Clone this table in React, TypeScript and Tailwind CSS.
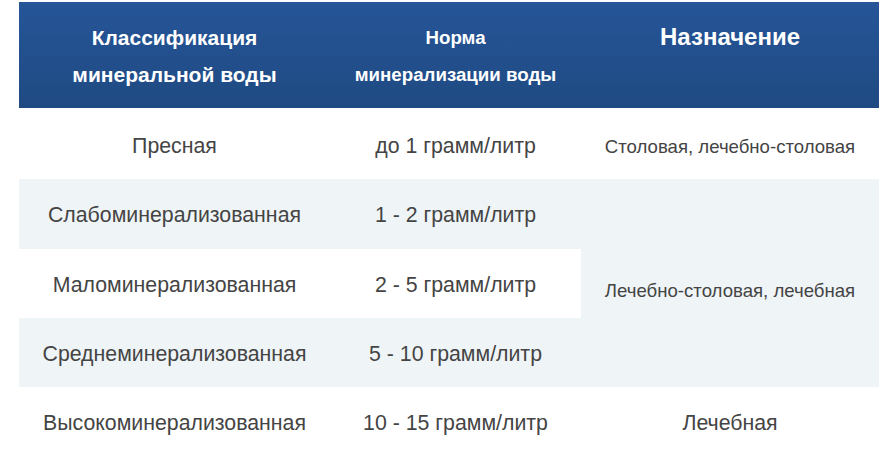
const rows = [
  { name: 'Пресная', norm: 'до 1 грамм/литр' },
  { name: 'Слабоминерализованная', norm: '1 - 2 грамм/литр' },
  { name: 'Маломинерализованная', norm: '2 - 5 грамм/литр' },
  { name: 'Среднеминерализованная', norm: '5 - 10 грамм/литр' },
  { name: 'Высокоминерализованная', norm: '10 - 15 грамм/литр' },
];

export default function App() {
  return (
    <div className="bg-white w-[880px] h-[468px] pt-[2px] pl-[19px] font-['Liberation_Sans',Arial,sans-serif]">
      <table className="border-collapse w-[860px] table-fixed">
        <colgroup>
          <col className="w-[311px]" />
          <col className="w-[251px]" />
          <col className="w-[298px]" />
        </colgroup>
        <thead>
          <tr className="h-[106px] bg-gradient-to-b from-[#265598] to-[#1f4a82] text-white font-bold">
            <th className="align-top pt-[17px] text-[21px] leading-[37px] font-bold">
              Классификация
              <br />
              минеральной воды
            </th>
            <th className="align-top pt-[17px] text-[18.7px] leading-[37px] font-bold">
              Норма
              <br />
              минерализации воды
            </th>
            <th className="align-top pt-[16px] text-[24px] leading-[37px] font-bold">Назначение</th>
          </tr>
        </thead>
        <tbody className="text-[#444] text-[21.3px]">
          <tr className="h-[71px]">
            <td className="text-center pt-[6px]">{rows[0].name}</td>
            <td className="text-center pt-[6px]">{rows[0].norm}</td>
            <td className="text-center text-[18.6px] pt-[6px]">Столовая, лечебно-столовая</td>
          </tr>
          <tr className="h-[70px] bg-[#eff4f7]">
            <td className="text-center pt-1">{rows[1].name}</td>
            <td className="text-center pt-1">{rows[1].norm}</td>
            <td rowSpan={3} className="text-center text-[18.6px] pt-4">
              Лечебно-столовая, лечебная
            </td>
          </tr>
          <tr className="h-[69px]">
            <td className="text-center bg-white pt-1">{rows[2].name}</td>
            <td className="text-center bg-white pt-1">{rows[2].norm}</td>
          </tr>
          <tr className="h-[69px] bg-[#eff4f7]">
            <td className="text-center pt-1">{rows[3].name}</td>
            <td className="text-center pt-1">{rows[3].norm}</td>
          </tr>
          <tr className="h-[70px]">
            <td className="text-center pt-1">{rows[4].name}</td>
            <td className="text-center pt-1">{rows[4].norm}</td>
            <td className="text-center pt-1">Лечебная</td>
          </tr>
        </tbody>
      </table>
    </div>
  );
}
